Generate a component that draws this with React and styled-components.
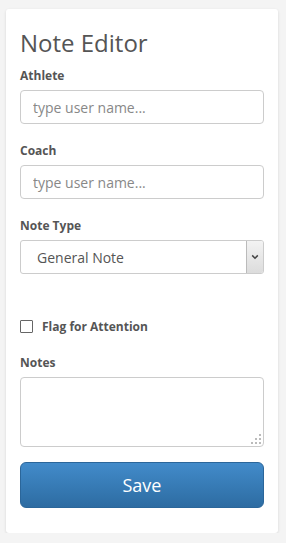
import React from 'react';
import styled, { createGlobalStyle } from 'styled-components';

const GlobalStyle = createGlobalStyle`
  html, body {
    margin: 0;
    padding: 0;
    background: #f4f4f4;
  }
  body {
    font-family: "Open Sans", "Liberation Sans", sans-serif;
    color: #555;
  }
  * {
    box-sizing: border-box;
  }
`;

export default function App() {
  return (
    <>
      <GlobalStyle />
      <Card>
        <Title>Note Editor</Title>

        <Group>
          <Label>Athlete</Label>
          <TextInput placeholder="type user name..." />
        </Group>

        <Group>
          <Label>Coach</Label>
          <TextInput placeholder="type user name..." />
        </Group>

        <Group>
          <Label>Note Type</Label>
          <SelectWrap>
            <Select defaultValue="general">
              <option value="general">General Note</option>
              <option value="injury">Injury</option>
              <option value="training">Training</option>
            </Select>
            <ArrowBox>
              <svg width="8" height="6" viewBox="0 0 8 6">
                <path d="M1.2 1.4 L4 4.2 L6.8 1.4" fill="none" stroke="#444" strokeWidth="1.5" />
              </svg>
            </ArrowBox>
          </SelectWrap>
        </Group>

        <CheckRow>
          <CheckBox type="checkbox" />
          <CheckLabel>Flag for Attention</CheckLabel>
        </CheckRow>

        <Group>
          <Label>Notes</Label>
          <AreaWrap>
            <TextArea />
            <Grip width="12" height="12" viewBox="0 0 12 12">
              <rect x="9" y="1" width="2" height="2" />
              <rect x="5" y="5" width="2" height="2" />
              <rect x="9" y="5" width="2" height="2" />
              <rect x="1" y="9" width="2" height="2" />
              <rect x="5" y="9" width="2" height="2" />
              <rect x="9" y="9" width="2" height="2" />
            </Grip>
          </AreaWrap>
        </Group>

        <SaveButton>Save</SaveButton>
      </Card>
    </>
  );
}

const Card = styled.div`
  width: 272px;
  margin: 9px 0 0 6px;
  padding: 19px 14px 25px;
  background: #fff;
  border-radius: 3px;
  box-shadow: 0 1px 3px rgba(0, 0, 0, 0.12);
`;

const Title = styled.h1`
  margin: 0 0 9px;
  font-size: 24px;
  font-weight: 400;
  line-height: 30px;
  color: #555;
`;

const Group = styled.div`
  margin-bottom: 18px;
`;

const Label = styled.label`
  display: block;
  margin-bottom: 6px;
  font-size: 12px;
  font-weight: 700;
  line-height: 17px;
  color: #555;
`;

const TextInput = styled.input`
  display: block;
  width: 100%;
  height: 34px;
  padding: 6px 12px;
  border: 1px solid #ccc;
  border-radius: 4px;
  font-family: inherit;
  font-size: 14px;
  color: #555;
  outline: none;
  &::placeholder {
    color: #888;
  }
`;

const SelectWrap = styled.div`
  display: flex;
  height: 34px;
  border: 1px solid #ccc;
  border-radius: 3px;
  background: #fff;
`;

const Select = styled.select`
  flex: 1;
  min-width: 0;
  appearance: none;
  border: 0;
  background: transparent;
  padding: 0 16px;
  font-family: inherit;
  font-size: 14px;
  color: #555;
  outline: none;
`;

const ArrowBox = styled.div`
  display: flex;
  align-items: center;
  justify-content: center;
  width: 17px;
  border-left: 1px solid #bbb;
  border-radius: 0 2px 2px 0;
  background: linear-gradient(to bottom, #f3f3f3, #dcdcdc);
  pointer-events: none;
`;

const CheckRow = styled.label`
  display: flex;
  align-items: center;
  gap: 9px;
  height: 17px;
  margin: 44px 0 19px;
`;

const CheckBox = styled.input`
  appearance: none;
  width: 13px;
  height: 13px;
  margin: 0;
  border: 1px solid #666;
  border-radius: 1px;
  background: #fff;
`;

const CheckLabel = styled.span`
  font-size: 12px;
  font-weight: 700;
  color: #555;
`;

const AreaWrap = styled.div`
  position: relative;
`;

const TextArea = styled.textarea`
  display: block;
  width: 100%;
  height: 70px;
  padding: 6px 12px;
  border: 1px solid #ccc;
  border-radius: 4px;
  font-family: inherit;
  font-size: 14px;
  color: #555;
  resize: none;
  outline: none;
`;

const Grip = styled.svg`
  position: absolute;
  right: 2px;
  bottom: 2px;
  fill: #bbb;
  pointer-events: none;
`;

const SaveButton = styled.button`
  display: block;
  width: 100%;
  height: 46px;
  margin-top: -3px;
  border: 1px solid #2b669a;
  border-radius: 6px;
  background: linear-gradient(to bottom, #428bca 0%, #2d6ca2 100%);
  font-family: inherit;
  font-size: 18px;
  color: #fff;
  cursor: pointer;
`;
